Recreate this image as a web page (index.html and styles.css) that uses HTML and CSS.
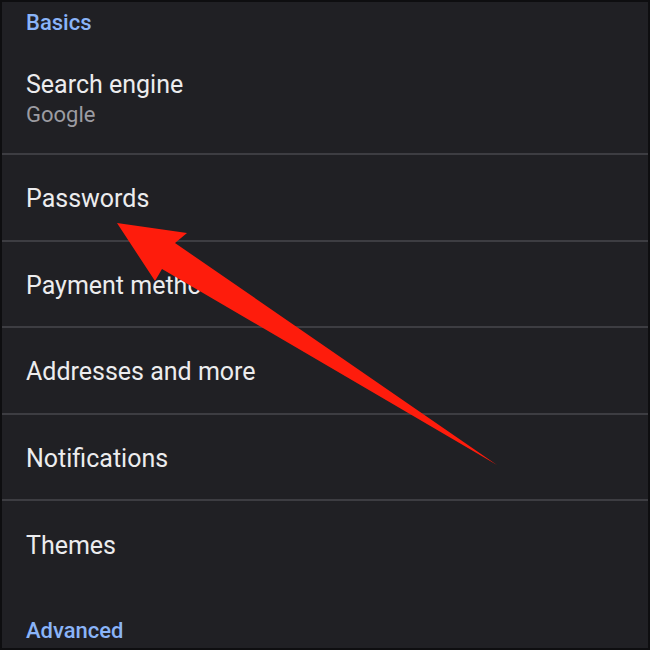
FILE: index.html
```html
<!DOCTYPE html>
<html lang="en">
<head>
    <meta charset="UTF-8">
    <meta name="viewport" content="width=device-width, initial-scale=1.0">
    <title>Settings</title>
    <link rel="stylesheet" href="styles.css">
</head>
<body>
    <div class="screen">
        <div class="section-title">Basics</div>
        <div class="row row-tall">
            <div class="row-title">Search engine</div>
            <div class="row-sub">Google</div>
        </div>
        <div class="row">
            <div class="row-title">Passwords</div>
        </div>
        <div class="row">
            <div class="row-title">Payment methods</div>
        </div>
        <div class="row">
            <div class="row-title">Addresses and more</div>
        </div>
        <div class="row">
            <div class="row-title">Notifications</div>
        </div>
        <div class="row row-last">
            <div class="row-title">Themes</div>
        </div>
        <div class="section-title section-bottom">Advanced</div>

        <!-- red pointer drawn over the list -->
        <svg class="arrow" width="650" height="650" viewBox="0 0 650 650">
            <polygon points="117,223 187,233 175,243 497,465 162,269 155,281" fill="#fe1c0c"/>
        </svg>
    </div>
</body>
</html>
```

FILE: styles.css
```css
body{
    margin: 0;
    background-color: #0e0e10;
    font-family: Roboto, "Liberation Sans", Arial, sans-serif;
}
.screen{
    position: relative;
    width: 646px;
    height: 646px;
    margin: 2px;
    background-color: #202024;
    overflow: hidden;
}
.section-title{
    height: 40px;
    padding-left: 24px;
    display: flex;
    align-items: center;
    font-size: 22px;
    font-weight: 500;
    color: #8ab4f8;
}
.section-bottom{
    height: auto;
    padding-top: 32px;
}
.row{
    height: 81.6px;
    padding-left: 24px;
    padding-top: 3px;
    border-bottom: 2px solid #3d3d42;
    display: flex;
    flex-direction: column;
    justify-content: center;
}
.row-tall{
    height: 110px;
    padding-top: 1px;
}
.row-last{
    border-bottom: none;
}
.row-title{
    font-size: 25px;
    color: #ececee;
}
.row-sub{
    font-size: 22px;
    color: #9c9ca2;
    margin-top: 3px;
}
.arrow{
    position: absolute;
    left: -2px;
    top: -2px;
}
```
